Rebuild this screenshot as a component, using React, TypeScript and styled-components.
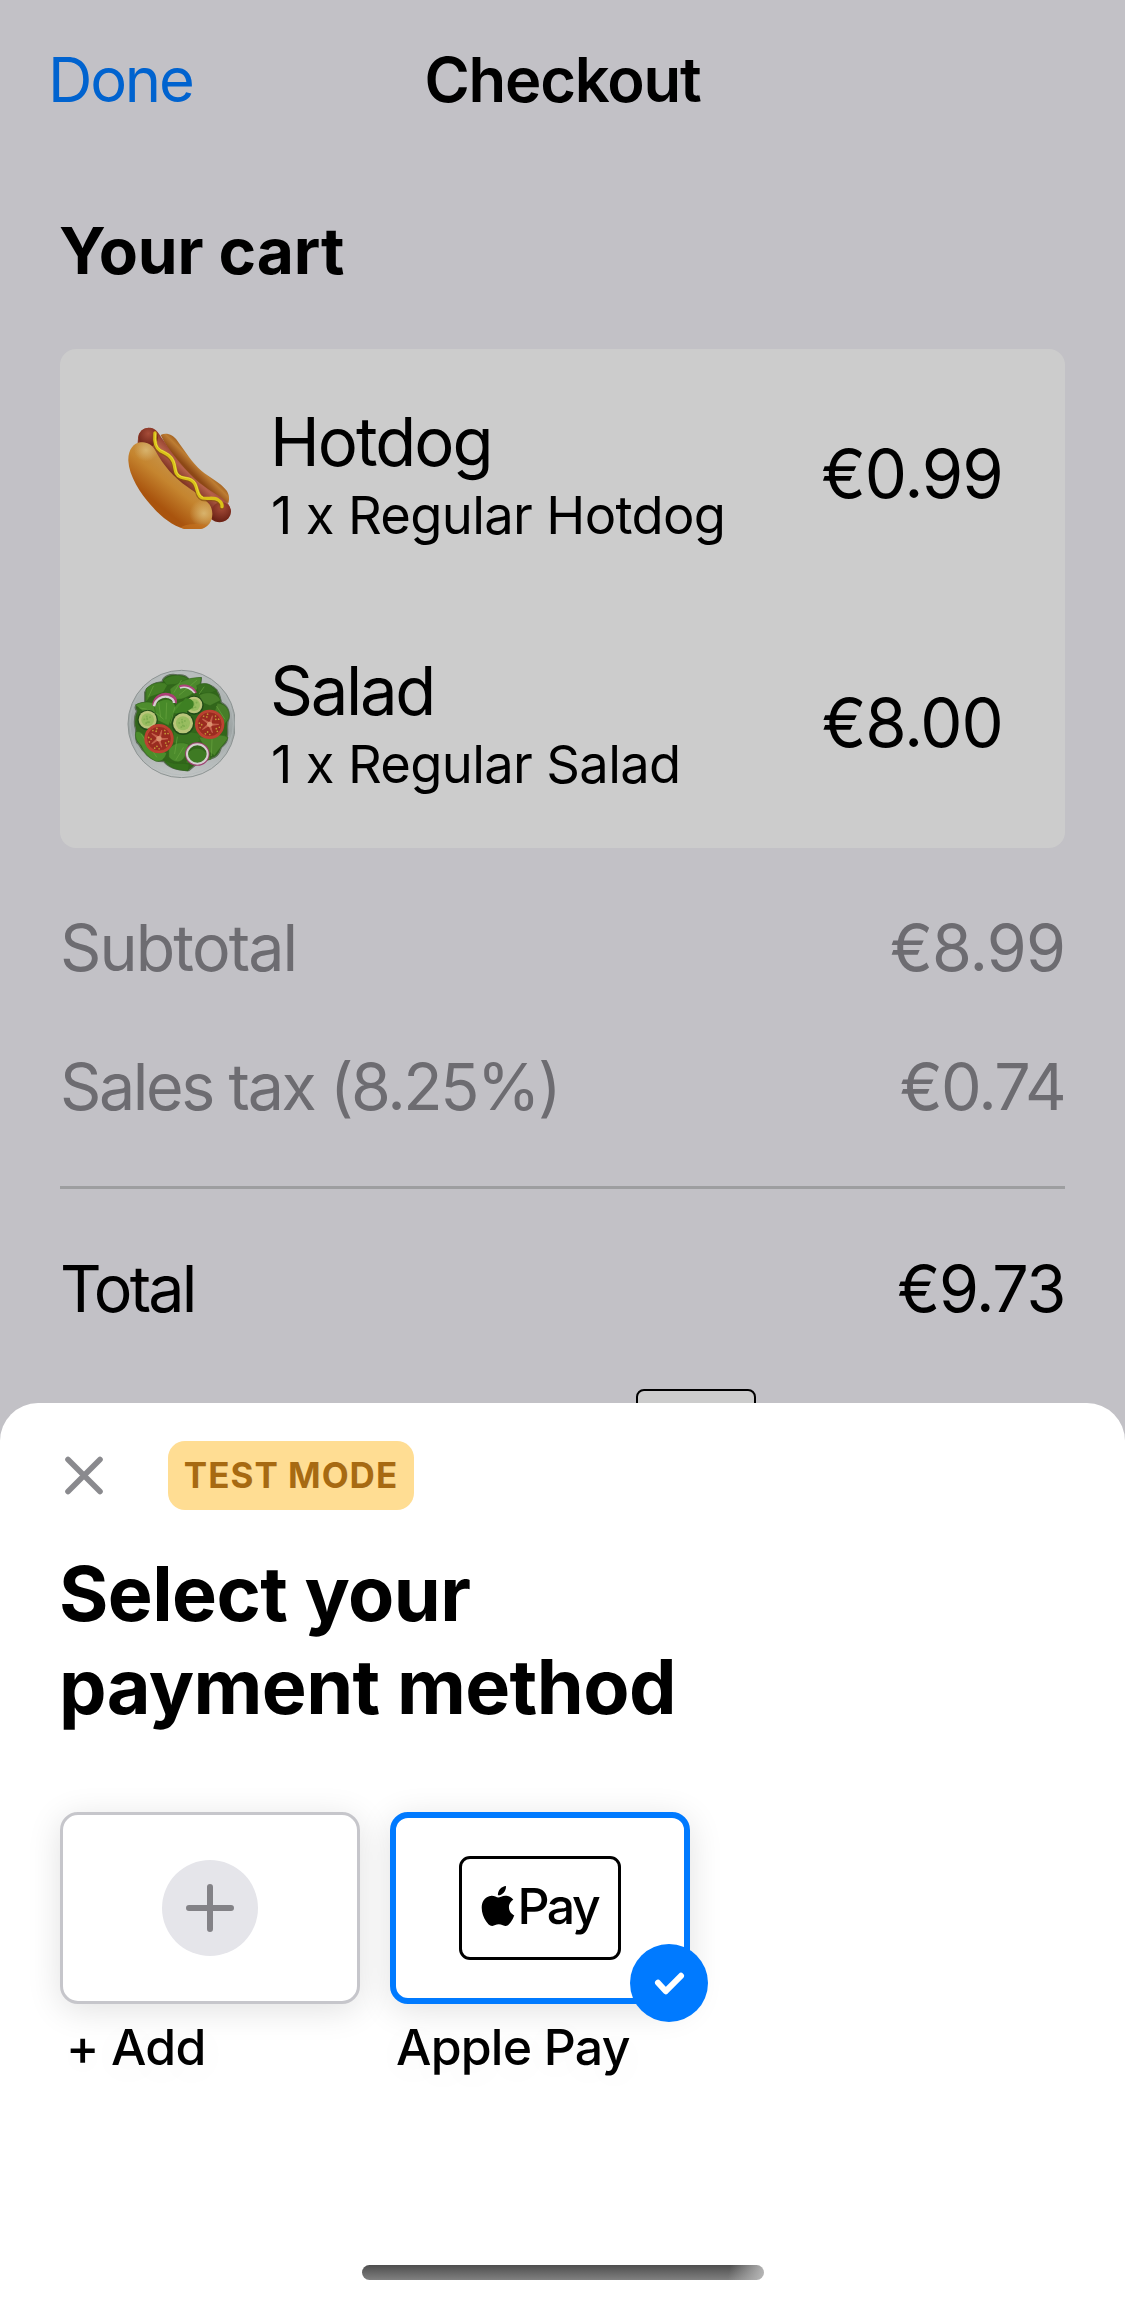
import React from "react";
import styled, { createGlobalStyle } from "styled-components";

const GlobalStyle = createGlobalStyle`
  *, *::before, *::after { box-sizing: border-box; }
  html, body { margin: 0; padding: 0; background: #c2c1c6; }
  body { font-family: Inter, "Liberation Sans", sans-serif; color: #000; -webkit-font-smoothing: antialiased; }
  h1, h2, p { margin: 0; }
  button { font: inherit; border: 0; background: none; padding: 0; margin: 0; color: inherit; }
`;

const Screen = styled.div`
  position: relative;
  width: 1125px;
  height: 2304px;
  overflow: hidden;
  background: #c2c1c6;
`;

const NavBar = styled.header`
  display: grid;
  grid-template-columns: 1fr auto 1fr;
  align-items: center;
  height: 159px;
  padding: 0 48px;
`;

const DoneButton = styled.button`
  justify-self: start;
  color: #0063cf;
  font-size: 61.5px;
  line-height: 80px;
  letter-spacing: -2.2px;
`;

const NavTitle = styled.h1`
  font-size: 61.5px;
  line-height: 80px;
  font-weight: 600;
  letter-spacing: -1.2px;
`;

const Content = styled.main`
  display: flex;
  flex-direction: column;
  padding: 51px 60px 0;
`;

const SectionTitle = styled.h2`
  margin-left: -1px;
  font-size: 64px;
  line-height: 81px;
  font-weight: 700;
  letter-spacing: -0.1px;
`;

const CartCard = styled.section`
  display: flex;
  flex-direction: column;
  height: 499px;
  margin-top: 58px;
  border-radius: 16px;
  background: #cccccc;
`;

const CartRow = styled.div`
  display: flex;
  flex: 1;
  align-items: center;
  padding: 0 62.5px 0 65px;
`;

const ItemText = styled.div`
  flex: 1;
  padding: 5px 0 0 35px;
`;

const ItemName = styled.p<{ $spacing: number }>`
  font-size: 67px;
  line-height: 78px;
  letter-spacing: ${(p) => p.$spacing}px;
`;

const ItemDetail = styled.p`
  padding-left: 1px;
  font-size: 52.5px;
  line-height: 69px;
  letter-spacing: -0.65px;
`;

const ItemPrice = styled.span`
  font-size: 67px;
  line-height: 78px;
  letter-spacing: -1.2px;
`;

const Summary = styled.div`
  padding-top: 30px;
`;

const SummaryRow = styled.div<{ $strong?: boolean }>`
  display: flex;
  align-items: center;
  justify-content: space-between;
  height: 139px;
  font-size: 64.5px;
  color: ${(p) => (p.$strong ? "#000" : "#6d6c71")};
`;

const Spaced = styled.span<{ $spacing: number }>`
  letter-spacing: ${(p) => p.$spacing}px;
`;

const Divider = styled.hr`
  height: 3px;
  margin: 30px 0;
  border: 0;
  background: #9d9ea0;
`;

const MethodPreview = styled.div`
  width: 120px;
  height: 78px;
  margin: 31px 0 0 576px;
  border: 2.5px solid #000;
  border-radius: 8px;
  background: #cccccc;
`;

const Sheet = styled.section`
  position: absolute;
  inset: 1403px 0 0 0;
  display: flex;
  flex-direction: column;
  padding: 38px 60px 24px;
  border-radius: 38px 38px 0 0;
  background: #fff;
`;

const SheetBar = styled.div`
  display: flex;
  align-items: center;
  gap: 60px;
  height: 69px;
`;

const CloseButton = styled.button`
  display: flex;
  width: 48px;
  height: 48px;
`;

const TestBadge = styled.span`
  width: 246px;
  height: 69px;
  border-radius: 17px;
  background: #ffdd93;
  color: #a76a12;
  font-size: 35px;
  font-weight: 700;
  line-height: 69px;
  letter-spacing: 1px;
  text-align: center;
  white-space: nowrap;
`;

const SheetTitle = styled.h2`
  margin: 37px 0 0 -1px;
  font-size: 75.5px;
  line-height: 93px;
  font-weight: 700;
  letter-spacing: -0.6px;
`;

const Options = styled.div`
  display: flex;
  gap: 30px;
  margin-top: 79px;
`;

const Option = styled.div`
  width: 300px;
`;

const OptionCard = styled.div<{ $selected?: boolean }>`
  position: relative;
  display: flex;
  align-items: center;
  justify-content: center;
  height: 192px;
  border: ${(p) => (p.$selected ? "6px solid #007aff" : "3px solid #c6c6cb")};
  border-radius: 18px;
  background: #fff;
  box-shadow: 0 6px 34px rgba(0, 0, 0, 0.12);
`;

const OptionLabel = styled.p<{ $spacing: number }>`
  margin-top: 13px;
  padding-left: 6px;
  font-size: 50px;
  line-height: 60px;
  font-weight: 500;
  letter-spacing: ${(p) => p.$spacing}px;
  white-space: nowrap;
  text-shadow: 0 6px 34px rgba(0, 0, 0, 0.05);
`;

const PlusDisc = styled.div`
  display: flex;
  align-items: center;
  justify-content: center;
  width: 96px;
  height: 96px;
  border-radius: 50%;
  background: #e5e5ea;
`;

const PayMark = styled.div`
  display: flex;
  align-items: center;
  width: 162px;
  height: 104px;
  padding: 0 0 4px 15.5px;
  border: 3.5px solid #000;
  border-radius: 11px;
  font-size: 50px;
  font-weight: 500;
  letter-spacing: -2.5px;
`;

const CheckBadge = styled.div`
  position: absolute;
  right: -24px;
  bottom: -24px;
  display: flex;
  width: 78px;
  height: 78px;
  border-radius: 50%;
  background: #007aff;
`;

const HomeIndicator = styled.div`
  align-self: center;
  width: 402px;
  height: 15px;
  margin-top: auto;
  border-radius: 8px;
  background: linear-gradient(100deg, rgba(190, 190, 190, 0) 91%, #b8b8b8 100%),
    linear-gradient(#4e4e4e, #808080);
`;

const HotdogArt = () => (
  <svg width="110" height="110" viewBox="75 55 330 330" fill="none">
    <defs>
      <linearGradient id="bunFront" x1="240" y1="200" x2="160" y2="300" gradientUnits="userSpaceOnUse">
        <stop offset="0" stopColor="#c79348" />
        <stop offset="0.45" stopColor="#c5852f" />
        <stop offset="1" stopColor="#a9540e" />
      </linearGradient>
      <linearGradient id="bunBack" x1="310" y1="180" x2="275" y2="215" gradientUnits="userSpaceOnUse">
        <stop offset="0" stopColor="#8e4c12" />
        <stop offset="0.5" stopColor="#bd7d33" />
        <stop offset="1" stopColor="#8d4816" />
      </linearGradient>
      <linearGradient id="sausage" x1="285" y1="195" x2="235" y2="250" gradientUnits="userSpaceOnUse">
        <stop offset="0" stopColor="#8d3a27" />
        <stop offset="0.4" stopColor="#b5614b" />
        <stop offset="1" stopColor="#6d2415" />
      </linearGradient>
      <radialGradient id="bunTip" cx="0.5" cy="0.5" r="0.5">
        <stop offset="0" stopColor="#d8b36c" />
        <stop offset="1" stopColor="#d8b36c" stopOpacity="0" />
      </radialGradient>
      <radialGradient id="sausageTip" cx="0.5" cy="0.3" r="0.7">
        <stop offset="0" stopColor="#a64c38" />
        <stop offset="1" stopColor="#6b2216" />
      </radialGradient>
      <clipPath id="bunClip">
        <path d="M85 180C84 148 100 127 122 125C143 123 158 134 168 153C190 194 222 230 262 258C286 276 312 290 328 311C341 330 339 353 328 369C314 386 288 391 262 387C221 380 182 347 153 314C121 277 87 226 85 180Z" />
      </clipPath>
    </defs>
    <path d="M182 103C200 94 219 103 232 120C257 154 276 185 305 211C330 232 360 244 379 269C388 281 389 296 385 307L350 300C290 260 230 200 182 103Z" fill="url(#bunBack)" />
    <path d="M114 112C115 91 132 80 151 81C171 84 177 100 188 116C220 165 255 210 300 248C330 272 363 287 382 306C397 324 394 347 379 359C363 369 345 365 333 355L113 127Z" fill="url(#sausage)" />
    <circle cx="145" cy="110" r="29" fill="url(#sausageTip)" />
    <circle cx="364" cy="333" r="29" fill="url(#sausageTip)" />
    <path d="M150 140C175 190 225 245 300 290" stroke="#5d1c12" strokeWidth="8" opacity="0.55" />
    <path d="M85 180C84 148 100 127 122 125C143 123 158 134 168 153C190 194 222 230 262 258C286 276 312 290 328 311C341 330 339 353 328 369C314 386 288 391 262 387C221 380 182 347 153 314C121 277 87 226 85 180Z" fill="url(#bunFront)" />
    <g clipPath="url(#bunClip)">
      <ellipse cx="138" cy="148" rx="36" ry="34" fill="url(#bunTip)" />
      <ellipse cx="312" cy="338" rx="44" ry="42" fill="url(#bunTip)" />
      <ellipse cx="288" cy="384" rx="46" ry="14" fill="#c67522" opacity="0.6" />
    </g>
    <path d="M165 99C163 120 164 141 181 150C199 159 213 165 220 183C228 203 222 220 242 229C259 236 272 230 284 248C294 264 290 286 308 292C325 296 342 288 355 298C365 305 367 312 366 319" stroke="#87520f" strokeWidth="12" strokeLinecap="round" opacity="0.7" transform="translate(-1 3)" />
    <path d="M165 97C163 120 164 141 181 150C199 159 213 165 220 183C228 203 222 220 242 229C259 236 272 230 284 248C294 264 290 286 308 292C325 296 342 288 355 298C365 305 367 312 366 318" stroke="#d9c218" strokeWidth="10" strokeLinecap="round" />
    <path d="M167 99C165 120 167 139 183 148C201 157 215 163 222 181C230 201 224 218 243 227C260 234 273 228 286 246C295 262 292 284 309 290" stroke="#ecdf45" strokeWidth="3" strokeLinecap="round" opacity="0.8" />
  </svg>
);

const leaves: [string, string][] = [
  ["M134 128C146 104 168 98 186 96C190 78 214 70 232 76C250 74 262 80 268 90L304 84L302 104C330 100 342 112 350 120C362 136 362 148 364 158C384 168 390 188 387 206C378 226 386 244 382 260C386 280 370 286 364 294C358 316 346 326 330 328C300 330 290 345 266 363C236 362 206 356 192 336C164 336 142 322 132 306C120 298 122 286 110 278C102 258 112 246 104 228C102 208 106 192 110 184C98 168 112 162 134 158Z", "#32661b"],
  ["M138 118C156 98 180 96 205 102L190 128L150 142L138 158Z", "#447f25"],
  ["M190 92C205 74 245 72 266 88L250 102L200 106Z", "#3d7822"],
  ["M210 118C240 92 275 82 304 84C304 112 280 138 245 148L214 150Z", "#4c882c"],
  ["M290 108C312 96 330 102 338 114L350 122L320 136L295 128Z", "#386f20"],
  ["M298 136C325 122 352 130 362 152L330 168L304 158Z", "#487f2a"],
  ["M106 166C135 150 168 158 188 174L204 215L160 212L128 184Z", "#4e8d2d"],
  ["M162 168C188 140 220 146 226 170C238 150 272 146 284 170L260 196L220 190L206 228L172 212Z", "#488a29"],
  ["M352 160C382 162 392 190 386 208C376 220 366 235 358 238L342 190Z", "#477d28"],
  ["M222 226C254 260 286 236 314 262L290 280C264 290 238 294 218 276Z", "#397420"],
  ["M296 262C330 266 362 246 384 264C374 284 360 292 344 318L318 300Z", "#4b842a"],
  ["M108 246C126 242 136 262 144 284L200 310C194 330 184 336 168 335C142 322 130 304 124 288C108 274 104 260 108 246Z", "#4b8d2b"],
  ["M206 300C222 276 248 276 266 284L256 318C244 344 222 340 206 322Z", "#4c8b2c"],
  ["M190 328C220 350 240 336 268 344L264 364C232 360 208 358 190 328Z", "#34701b"],
  ["M262 312C288 280 318 300 334 328C300 340 280 344 258 340Z", "#3e7a23"],
];

const Cucumber = ({ x, y, r }: { x: number; y: number; r: number }) => (
  <g>
    <circle cx={x} cy={y + 1} r={r} fill="#214b18" />
    <circle cx={x} cy={y} r={r - 4} fill="#b9c57a" />
    <circle cx={x} cy={y} r={r * 0.62} fill="#98bd60" />
    <path d={`M${x - r * 0.4} ${y}L${x + r * 0.35} ${y - r * 0.28}M${x - r * 0.22} ${y + r * 0.36}L${x + r * 0.3} ${y + r * 0.18}M${x - r * 0.1} ${y - r * 0.4}L${x} ${y + r * 0.3}`} stroke="#80ad50" strokeWidth="5" strokeDasharray="5 4" />
  </g>
);

const Tomato = ({ x, y }: { x: number; y: number }) => (
  <g transform={`translate(${x} ${y})`}>
    <circle r="44" fill="#bd4030" />
    <circle r="37" fill="#9a2b20" stroke="#c9563f" strokeWidth="1.5" />
    {[18, 90, 162, 234, 306].map((angle) => (
      <g key={angle} transform={`rotate(${angle})`}>
        <path d="M-1 -7L0 -27L3 -7Z" fill="#cf7d5e" stroke="#c4604a" strokeWidth="3" />
        <g fill="#c39a35">
          <circle cx="13" cy="-20" r="2.6" />
          <circle cx="21" cy="-23" r="2.6" />
          <circle cx="9" cy="-29" r="2.4" />
        </g>
      </g>
    ))}
    <circle r="8" fill="#db916f" />
  </g>
);

const SaladArt = () => (
  <svg width="110" height="110" viewBox="75 55 330 330" fill="none">
    <defs>
      <linearGradient id="plate" x1="245" y1="60" x2="245" y2="388" gradientUnits="userSpaceOnUse">
        <stop offset="0" stopColor="#bcc0c0" />
        <stop offset="0.55" stopColor="#9ea5a5" />
        <stop offset="1" stopColor="#c3c6c6" />
      </linearGradient>
    </defs>
    <circle cx="245" cy="223" r="161" fill="url(#plate)" stroke="#8d9493" strokeWidth="3" />
    <circle cx="245" cy="221" r="155" stroke="#b4bbbb" strokeWidth="2" />
    {leaves.map(([d, fill], i) => (
      <path key={i} d={d} fill={fill} stroke={i ? "#2d6218" : "#5e6f59"} strokeWidth={i ? 1.5 : 4} strokeLinejoin="round" />
    ))}
    <path d="M120 175Q160 178 190 208M176 158L182 202M200 160L198 208M224 174L212 220M244 92L222 128M290 92L238 136M232 262L224 312M250 294L228 330M124 254L170 322M336 270L334 318M350 170L374 208M160 110L146 140M312 112L298 132M276 168L250 186" stroke="#69a43f" strokeWidth="3" opacity="0.65" strokeLinecap="round" />
    <path d="M162 167C164 142 188 131 207 136C222 140 228 151 225 160" stroke="#ab3f76" strokeWidth="11" />
    <path d="M162 170C166 148 186 138 205 142C217 146 222 153 222 160" stroke="#d5cfd1" strokeWidth="7" />
    <path d="M238 112C258 103 281 114 287 130" stroke="#ae4379" strokeWidth="8" />
    <path d="M240 115C258 108 276 118 284 130" stroke="#d7d0d3" strokeWidth="5" />
    <Cucumber x={282} y={166} r={29} />
    <path d="M256 146C278 145 286 160 278 174L250 192L220 190Z" fill="#3e8023" />
    <Cucumber x={143} y={210} r={31} />
    <Cucumber x={249} y={221} r={34} />
    <Tomato x={177} y={267} />
    <Tomato x={329} y={224} />
    <ellipse cx="292" cy="313" rx="33" ry="32" stroke="#9e3f70" strokeWidth="7" />
    <ellipse cx="292" cy="313" rx="31" ry="29" stroke="#d4d0cf" strokeWidth="6" />
  </svg>
);

const CloseIcon = () => (
  <svg width="48" height="48" viewBox="0 0 48 48">
    <path d="M8 7.5L40 39.5M40 7.5L8 39.5" stroke="#8a8a8e" strokeWidth="5.6" strokeLinecap="round" />
  </svg>
);

const PlusIcon = () => (
  <svg width="48" height="48" viewBox="0 0 48 48">
    <path d="M24 3V45M3 24H45" stroke="#838287" strokeWidth="6" strokeLinecap="round" />
  </svg>
);

const AppleIcon = () => (
  <svg width="40" height="40" viewBox="0 0 24 24" fill="#000">
    <path d="M12.152 6.896c-.948 0-2.415-1.078-3.96-1.04-2.04.027-3.91 1.183-4.961 3.014-2.117 3.675-.546 9.103 1.519 12.09 1.013 1.454 2.208 3.09 3.792 3.039 1.52-.065 2.09-.987 3.935-.987 1.831 0 2.35.987 3.96.948 1.637-.026 2.676-1.48 3.676-2.948 1.156-1.688 1.636-3.325 1.662-3.415-.039-.013-3.182-1.221-3.22-4.857-.026-3.04 2.48-4.494 2.597-4.559-1.429-2.09-3.623-2.324-4.39-2.376-2-.156-3.675 1.09-4.61 1.09zM15.53 3.83c.843-1.012 1.4-2.427 1.245-3.83-1.207.052-2.662.805-3.532 1.818-.78.896-1.454 2.338-1.273 3.714 1.338.104 2.715-.688 3.559-1.701" />
  </svg>
);

const CheckIcon = () => (
  <svg width="78" height="78" viewBox="0 0 78 78" fill="none">
    <path d="M28 38.8L35.8 47.2L51 31.8" stroke="#fff" strokeWidth="6" strokeLinecap="round" strokeLinejoin="round" />
  </svg>
);

export default function App() {
  return (
    <>
      <GlobalStyle />
      <Screen>
        <NavBar>
          <DoneButton>Done</DoneButton>
          <NavTitle>Checkout</NavTitle>
        </NavBar>
        <Content>
          <SectionTitle>Your cart</SectionTitle>
          <CartCard>
            <CartRow>
              <HotdogArt />
              <ItemText>
                <ItemName $spacing={-2}>Hotdog</ItemName>
                <ItemDetail>1 x Regular Hotdog</ItemDetail>
              </ItemText>
              <ItemPrice>€0.99</ItemPrice>
            </CartRow>
            <CartRow>
              <SaladArt />
              <ItemText>
                <ItemName $spacing={-2.3}>Salad</ItemName>
                <ItemDetail>1 x Regular Salad</ItemDetail>
              </ItemText>
              <ItemPrice>€8.00</ItemPrice>
            </CartRow>
          </CartCard>
          <Summary>
            <SummaryRow>
              <Spaced $spacing={-1.9}>Subtotal</Spaced>
              <Spaced $spacing={-0.9}>€8.99</Spaced>
            </SummaryRow>
            <SummaryRow>
              <Spaced $spacing={-2.4}>Sales tax (8.25%)</Spaced>
              <Spaced $spacing={-1.8}>€0.74</Spaced>
            </SummaryRow>
            <Divider />
            <SummaryRow $strong>
              <Spaced $spacing={-2.8}>Total</Spaced>
              <Spaced $spacing={-1.3}>€9.73</Spaced>
            </SummaryRow>
          </Summary>
          <MethodPreview />
        </Content>
        <Sheet>
          <SheetBar>
            <CloseButton aria-label="Close">
              <CloseIcon />
            </CloseButton>
            <TestBadge>TEST MODE</TestBadge>
          </SheetBar>
          <SheetTitle>
            Select your
            <br />
            payment method
          </SheetTitle>
          <Options>
            <Option>
              <OptionCard>
                <PlusDisc>
                  <PlusIcon />
                </PlusDisc>
              </OptionCard>
              <OptionLabel $spacing={-0.8}>+ Add</OptionLabel>
            </Option>
            <Option>
              <OptionCard $selected>
                <PayMark>
                  <AppleIcon />
                  <span>Pay</span>
                </PayMark>
                <CheckBadge>
                  <CheckIcon />
                </CheckBadge>
              </OptionCard>
              <OptionLabel $spacing={-0.8}>Apple Pay</OptionLabel>
            </Option>
          </Options>
          <HomeIndicator />
        </Sheet>
      </Screen>
    </>
  );
}
